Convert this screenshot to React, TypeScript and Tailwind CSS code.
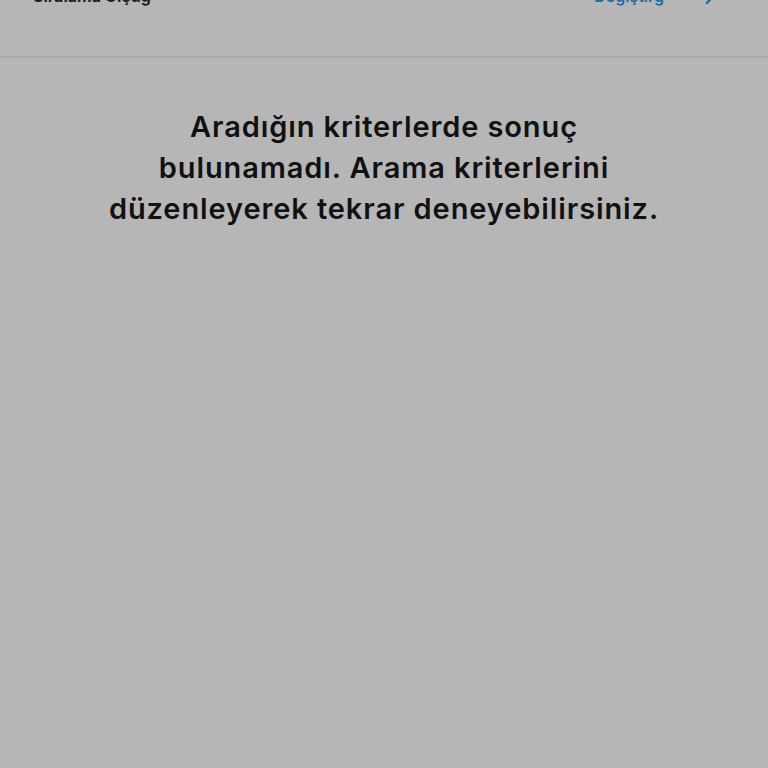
import React from 'react';

export default function App() {
  return (
    <div className="min-h-[768px] w-full bg-[#b6b6b6] flex flex-col" style={{ fontFamily: 'Inter, "Noto Sans", sans-serif' }}>
      <header className="h-[58px] border-b-2 border-[#a9a9a9] flex items-start justify-between pl-[33px] pr-[52px] overflow-hidden">
        <span className="-mt-[14px] text-[16px] font-bold text-[#1f1f1f] leading-[20px]">Sıralama Ölçüg</span>
        <span className="-mt-[14px] flex items-center gap-[40px] text-[16px] font-semibold text-[#1a6f9e] leading-[20px]">
          Değiştirg
          <svg width="12" height="20" viewBox="0 0 12 20" fill="none" stroke="#1a6f9e" strokeWidth="2.4" strokeLinecap="round">
            <path d="M3 3l6 7-6 7" />
          </svg>
        </span>
      </header>
      <main className="flex justify-center pt-[48px]">
        <p className="text-center text-[29px] leading-[41px] font-semibold tracking-[0.9px] text-[#111111]">
          Aradığın kriterlerde sonuç
          <br />
          bulunamadı. Arama kriterlerini
          <br />
          düzenleyerek tekrar deneyebilirsiniz.
        </p>
      </main>
    </div>
  );
}
